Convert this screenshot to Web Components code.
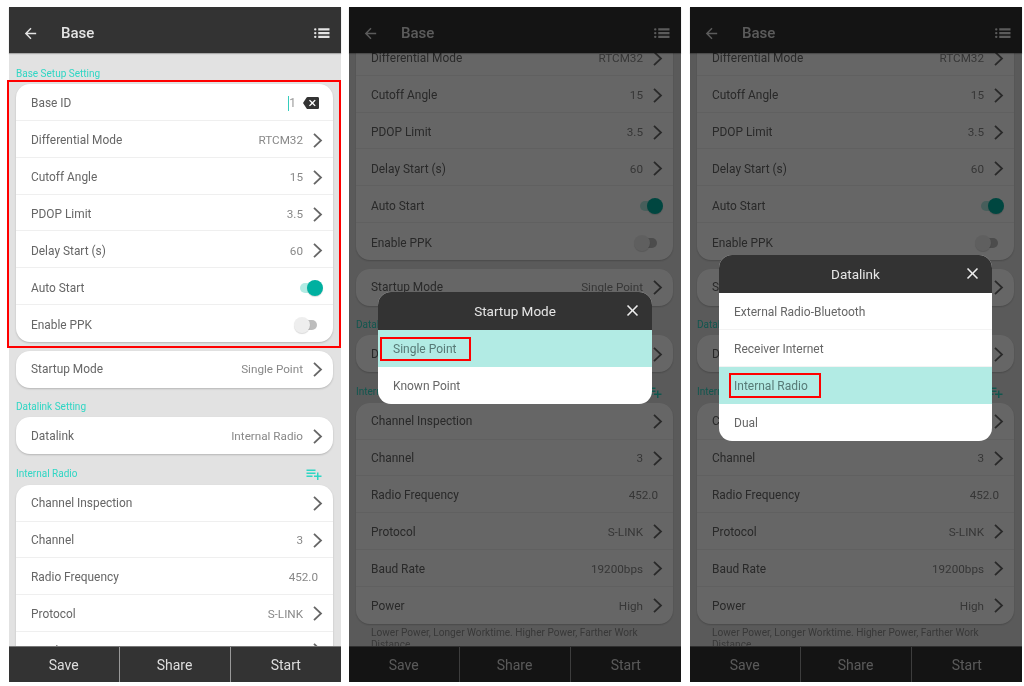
<!DOCTYPE html>
<html>
<head>
<meta charset="utf-8">
<title>Base</title>
<style>
  html, body { margin: 0; background: #fff; }
  body { font-family: Roboto, "Liberation Sans", sans-serif; }
  .sheet { display: flex; gap: 8px; padding: 7px 0 0 9px; }
</style>
</head>
<body>
<div class="sheet">
  <base-screen><base-form marked></base-form></base-screen>
  <base-screen scroll="82" dim>
    <base-form></base-form>
    <base-dialog slot="dialog" title="Startup Mode" style="width:274px;margin-top:7px">
      <base-option selected marked style="--box:-5px -15px -5px -13px">Single Point</base-option>
      <base-option>Known Point</base-option>
    </base-dialog>
  </base-screen>
  <base-screen scroll="82" dim style="margin-left:1px">
    <base-form></base-form>
    <base-dialog slot="dialog" title="Datalink" style="margin:7px 1px 0 0">
      <base-option>External Radio-Bluetooth</base-option>
      <base-option>Receiver Internet</base-option>
      <base-option selected marked style="--box:-6px -13px -5px -5px">Internal Radio</base-option>
      <base-option>Dual</base-option>
    </base-dialog>
  </base-screen>
</div>

<script>
const ICONS = {
  back: "M20 11H7.83l5.59-5.59L12 4l-8 8 8 8 1.41-1.41L7.83 13H20v-2z",
  list: "M3 5.5a1.6 1.6 0 1 0 0 3.2 1.6 1.6 0 0 0 0-3.2zm0 5a1.6 1.6 0 1 0 0 3.2 1.6 1.6 0 0 0 0-3.2zm0 5a1.6 1.6 0 1 0 0 3.2 1.6 1.6 0 0 0 0-3.2zM7 5.5h15v3H7zm0 5h15v3H7zm0 5h15v3H7z",
  backspace: "M22 3H7c-.69 0-1.23.35-1.59.88L0 12l5.41 8.11c.36.53.9.89 1.59.89h15c1.1 0 2-.9 2-2V5c0-1.1-.9-2-2-2zm-3 12.59L17.59 17 14 13.41 10.41 17 9 15.59 12.59 12 9 8.41 10.41 7 14 10.59 17.59 7 19 8.41 15.41 12 19 15.59z",
  add: "M14 10H2v2h12v-2zm0-4H2v2h12V6zm4 8v-4h-2v4h-4v2h4v4h2v-4h4v-2h-4zM2 16h8v-2H2v2z",
  close: "M19 6.41L17.59 5 12 10.59 6.41 5 5 6.41 10.59 12 5 17.59 6.41 19 12 13.41 17.59 19 19 17.59 13.41 12z"
};
const icon = (name, size) =>
  `<svg style="display:block" width="${size}" height="${size}" viewBox="0 0 24 24" fill="currentColor"><path d="${ICONS[name]}"/></svg>`;

class BaseScreen extends HTMLElement {
  constructor() {
    super();
    this.attachShadow({ mode: "open" });
  }

  connectedCallback() {
    const scroll = this.getAttribute("scroll") || 0;
    this.shadowRoot.innerHTML = `<style>
      :host { display: flex; flex-direction: column; position: relative; width: 332px; height: 675px; background: #e2e2e2; filter: blur(.4px); flex: none; }
      header { flex: none; position: relative; z-index: 2; box-sizing: border-box; height: 46px; background: #333; color: #e4e4e4; display: flex; align-items: center; padding: 6px 10px 0 13px; box-shadow: 0 1px 1px rgba(0,0,0,.25); }
      header h1 { flex: 1; margin: 0 0 0 22px; font-size: 15px; font-weight: 500; }
      main { flex: 1; min-height: 0; overflow: clip; overflow-clip-margin: 3px; }
      main > div { margin-top: -${scroll}px; }
      footer { flex: none; position: relative; z-index: 2; height: 35px; background: #333; border-top: 1px solid #777; display: grid; grid-template-columns: 109.5px 111px 1fr; }
      footer span { display: flex; align-items: center; justify-content: center; color: #dedede; font-size: 14px; border-left: 1px solid #999; }
      footer span:first-child { border-left: 0; }
      .dim { position: absolute; inset: 0; z-index: 5; background: rgba(0,0,0,.6); display: none; align-items: center; justify-content: center; }
      :host([dim]) .dim { display: flex; }
    </style>
    <header>${icon("back", 17)}<h1>Base</h1>${icon("list", 18)}</header>
    <main><div><slot></slot></div></main>
    <footer><span>Save</span><span>Share</span><span>Start</span></footer>
    <div class="dim"><slot name="dialog"></slot></div>`;
  }
}

class BaseCard extends HTMLElement {
  constructor() {
    super();
    this.attachShadow({ mode: "open" });
    this.shadowRoot.innerHTML = `<style>
      :host { display: block; position: relative; background: #fff; border-radius: 14px; box-shadow: 0 1px 2px rgba(0,0,0,.2); margin: 0 8px 0 7px; }
      :host([marked])::after { content: ""; position: absolute; inset: -4px -8px -6px -9px; border: 2px solid #f00; pointer-events: none; }
    </style><slot></slot>`;
  }
}

class BaseRow extends HTMLElement {
  constructor() {
    super();
    this.attachShadow({ mode: "open" });
  }

  connectedCallback() {
    const value = this.getAttribute("value") || "";
    const chevron = this.hasAttribute("chevron")
      ? `<svg class="chev" width="10" height="15" viewBox="0 0 10 15" fill="none" stroke="#666" stroke-width="1.8"><path d="M1 .8l7 6.7-7 6.7"/></svg>`
      : "";
    this.shadowRoot.innerHTML = `<style>
      :host { display: flex; align-items: center; box-sizing: border-box; height: 36.86px; padding: var(--row-pad, 1px) 15px 0; border-bottom: 1px solid #efefef; font-size: 11.9px; color: #666; }
      :host(:last-child) { border-bottom: 0; }
      .label { flex: 1; }
      .value { color: #888; font-size: 11.7px; }
      .chev { margin: 0 -5px 0 10px; }
    </style>
    <span class="label"><slot></slot></span><span class="value">${value}</span>${chevron}<slot name="end"></slot>`;
  }
}

class BaseToggle extends HTMLElement {
  constructor() {
    super();
    this.attachShadow({ mode: "open" });
    this.shadowRoot.innerHTML = `<style>
      :host { display: block; position: relative; width: 29px; height: 16px; margin-right: -5px; }
      .track { position: absolute; left: 6px; right: 6px; top: 3px; height: 10px; border-radius: 5px; background: #bdbdbd; }
      .knob { position: absolute; left: 0; top: 0; width: 16px; height: 16px; border-radius: 50%; background: #eee; box-shadow: 0 1px 1px rgba(0,0,0,.15); }
      :host([on]) .track { background: #b2ebe4; }
      :host([on]) .knob { left: auto; right: 0; background: #00b0a0; }
    </style><div class="track"></div><div class="knob"></div>`;
  }
}

class BaseSection extends HTMLElement {
  constructor() {
    super();
    this.attachShadow({ mode: "open" });
    this.shadowRoot.innerHTML = `<style>
      :host { display: flex; align-items: center; justify-content: space-between; height: 12px; padding: var(--pad, 13px 18px 4px 7px); font-size: 10px; color: #2fd6c4; }
    </style><span><slot></slot></span><slot name="end"></slot>`;
  }
}

class BaseForm extends HTMLElement {
  constructor() {
    super();
    this.attachShadow({ mode: "open" });
  }

  connectedCallback() {
    const marked = this.hasAttribute("marked") ? "marked" : "";
    this.shadowRoot.innerHTML = `<style>
      :host { display: block; }
      .end { display: flex; align-items: center; }
      .caret { display: block; width: 1.5px; height: 15px; background: #35cdbd; }
      .num { color: #999; margin: 0 7px 0 0; }
      .del { display: block; color: #333; margin-right: -1px; }
      .gap { height: 9px; }
      .note { margin: 3px 21px 0 22px; font-size: 10.1px; line-height: 12px; color: #8c8c8c; }
      .plus { display: block; color: #2fd6c4; }
    </style>
    <base-section style="--pad:14px 18px 5px 7px">Base Setup Setting</base-section>
    <base-card ${marked} style="--row-pad:3px">
      <base-row><span>Base ID</span><span slot="end" class="end"><i class="caret"></i><span class="num">1</span><span class="del">${icon("backspace", 16)}</span></span></base-row>
      <base-row value="RTCM32" chevron>Differential Mode</base-row>
      <base-row value="15" chevron>Cutoff Angle</base-row>
      <base-row value="3.5" chevron>PDOP Limit</base-row>
      <base-row value="60" chevron>Delay Start (s)</base-row>
      <base-row>Auto Start<base-toggle slot="end" on></base-toggle></base-row>
      <base-row>Enable PPK<base-toggle slot="end"></base-toggle></base-row>
    </base-card>
    <div class="gap"></div>
    <base-card style="--row-pad:0px"><base-row value="Single Point" chevron>Startup Mode</base-row></base-card>
    <base-section>Datalink Setting</base-section>
    <base-card style="--row-pad:2px"><base-row value="Internal Radio" chevron>Datalink</base-row></base-card>
    <base-section style="--pad:14px 18px 5px 7px">Internal Radio<span slot="end" class="plus">${icon("add", 18)}</span></base-section>
    <base-card>
      <base-row chevron>Channel Inspection</base-row>
      <base-row value="3" chevron>Channel</base-row>
      <base-row value="452.0">Radio Frequency</base-row>
      <base-row value="S-LINK" chevron>Protocol</base-row>
      <base-row value="19200bps" chevron>Baud Rate</base-row>
      <base-row value="High" chevron>Power</base-row>
    </base-card>
    <p class="note">Lower Power, Longer Worktime. Higher Power, Farther Work Distance</p>`;
  }
}

class BaseDialog extends HTMLElement {
  constructor() {
    super();
    this.attachShadow({ mode: "open" });
  }

  connectedCallback() {
    this.shadowRoot.innerHTML = `<style>
      :host { display: block; width: 273px; border-radius: 13px; overflow: hidden; background: #fff; }
      .head { position: relative; height: 37.5px; background: #333; color: #e6e6e6; font-size: 13.5px; display: flex; align-items: center; justify-content: center; }
      .x { position: absolute; right: 10px; top: 9px; color: #eee; }
    </style>
    <div class="head"><span>${this.getAttribute("title")}</span><span class="x">${icon("close", 19)}</span></div>
    <slot></slot>`;
  }
}

class BaseOption extends HTMLElement {
  constructor() {
    super();
    this.attachShadow({ mode: "open" });
    this.shadowRoot.innerHTML = `<style>
      :host { display: flex; align-items: center; box-sizing: border-box; height: 37px; padding: 2px 15px 0; font-size: 12px; color: #666; border-bottom: 1px solid #f3f3f3; }
      :host(:last-child) { border-bottom: 0; }
      :host([selected]) { background: #b2ebe4; color: #577a76; border-bottom: 0; }
      span { position: relative; }
      :host([marked]) span::after { content: ""; position: absolute; inset: var(--box); border: 2px solid #f00; }
    </style><span><slot></slot></span>`;
  }
}

customElements.define("base-screen", BaseScreen);
customElements.define("base-card", BaseCard);
customElements.define("base-row", BaseRow);
customElements.define("base-toggle", BaseToggle);
customElements.define("base-section", BaseSection);
customElements.define("base-form", BaseForm);
customElements.define("base-dialog", BaseDialog);
customElements.define("base-option", BaseOption);
</script>
</body>
</html>
